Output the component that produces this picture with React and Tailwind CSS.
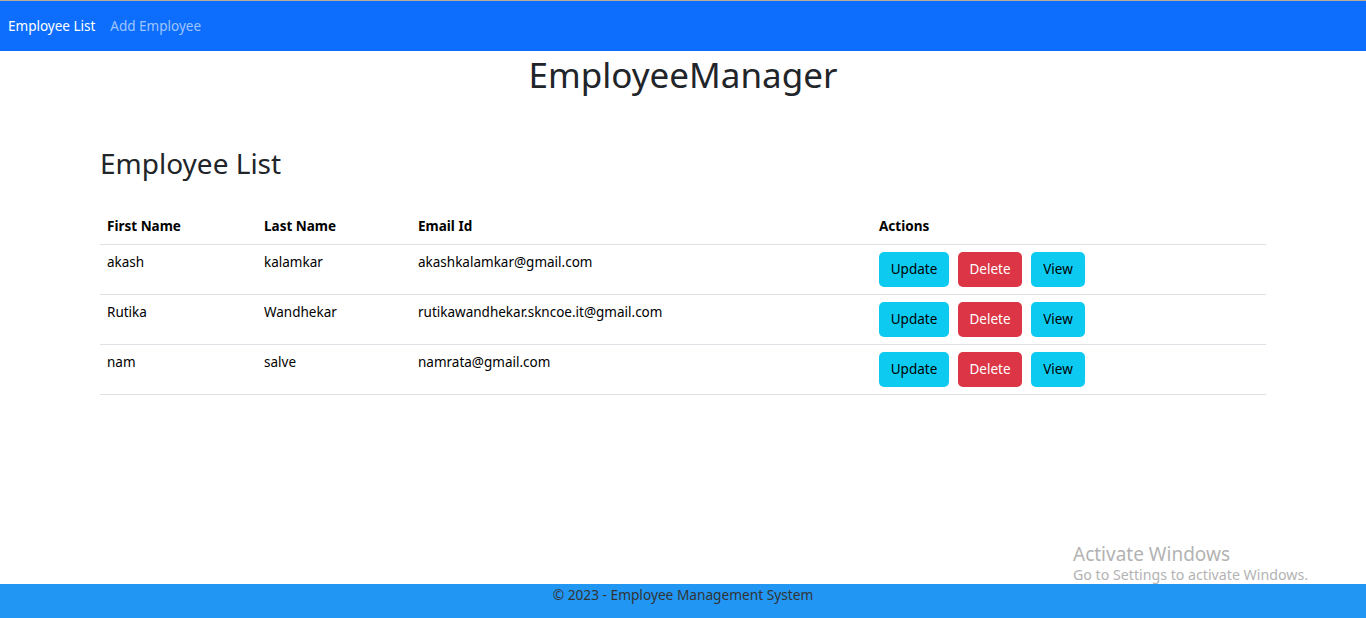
import React from 'react';

const employees = [
  { firstName: 'akash', lastName: 'kalamkar', emailId: 'akashkalamkar@gmail.com' },
  { firstName: 'Rutika', lastName: 'Wandhekar', emailId: 'rutikawandhekar.skncoe.it@gmail.com' },
  { firstName: 'nam', lastName: 'salve', emailId: 'namrata@gmail.com' },
];

const font = { fontFamily: '"Noto Sans", "Open Sans", sans-serif' };

function Header() {
  return (
    <header>
      <div className="h-px bg-[#b9ab97]" />
      <nav className="h-[50px] bg-[#0d6efd] flex items-center px-2 gap-[15px] text-[13.5px] pt-[1px]">
        <a className="text-white cursor-pointer">Employee List</a>
        <a className="text-white/60 cursor-pointer">Add Employee</a>
      </nav>
    </header>
  );
}

function ActionButtons() {
  return (
    <div className="flex gap-[9px]">
      <button className="h-[35px] w-[70px] rounded-[5px] bg-[#0dcaf0] text-black text-[13.5px]">Update</button>
      <button className="h-[35px] w-[64px] rounded-[5px] bg-[#dc3545] text-white text-[13.5px]">Delete</button>
      <button className="h-[35px] w-[54px] rounded-[5px] bg-[#0dcaf0] text-black text-[13.5px]">View</button>
    </div>
  );
}

function EmployeeTable() {
  return (
    <table className="w-full text-[13.5px] leading-[21px] text-black border-collapse">
      <thead>
        <tr className="border-b border-[#dee2e6]">
          <th className="w-[156px] text-left font-bold px-[7px] pt-[8px] pb-[7px]">First Name</th>
          <th className="w-[154px] text-left font-bold px-[8px] pt-[8px] pb-[7px]">Last Name</th>
          <th className="w-[461px] text-left font-bold px-[8px] pt-[8px] pb-[7px]">Email Id</th>
          <th className="text-left font-bold px-[8px] pt-[8px] pb-[7px]">Actions</th>
        </tr>
      </thead>
      <tbody>
        {employees.map((e) => (
          <tr key={e.emailId} className="h-[50px] border-b border-[#dee2e6] align-top">
            <td className="px-[7px] pt-[7px]">{e.firstName}</td>
            <td className="px-[8px] pt-[7px]">{e.lastName}</td>
            <td className="px-[8px] pt-[7px]">{e.emailId}</td>
            <td className="px-[8px] pt-[7px]">
              <ActionButtons />
            </td>
          </tr>
        ))}
      </tbody>
    </table>
  );
}

export default function App() {
  return (
    <div className="relative min-h-[618px] flex flex-col bg-white text-[#212529]" style={font}>
      <Header />
      <main className="flex-1">
        <h1 className="text-center text-[35px] leading-[48px] font-normal">EmployeeManager</h1>
        <div className="px-[100px] pt-[45px]">
          <h2 className="text-[28px] leading-[38px] font-normal">Employee List</h2>
          <div className="mt-[26px]">
            <EmployeeTable />
          </div>
        </div>
      </main>
      <footer className="h-[34px] bg-[#2196f3] text-center text-[13.7px] text-[#333] pt-[1px]">
        © 2023 - Employee Management System
      </footer>
      <div className="absolute left-[1073px] top-[542px] text-[#b3b3b3] pointer-events-none">
        <div className="text-[19px] leading-[24px]">Activate Windows</div>
        <div className="text-[14.2px] leading-[18px]">Go to Settings to activate Windows.</div>
      </div>
    </div>
  );
}
